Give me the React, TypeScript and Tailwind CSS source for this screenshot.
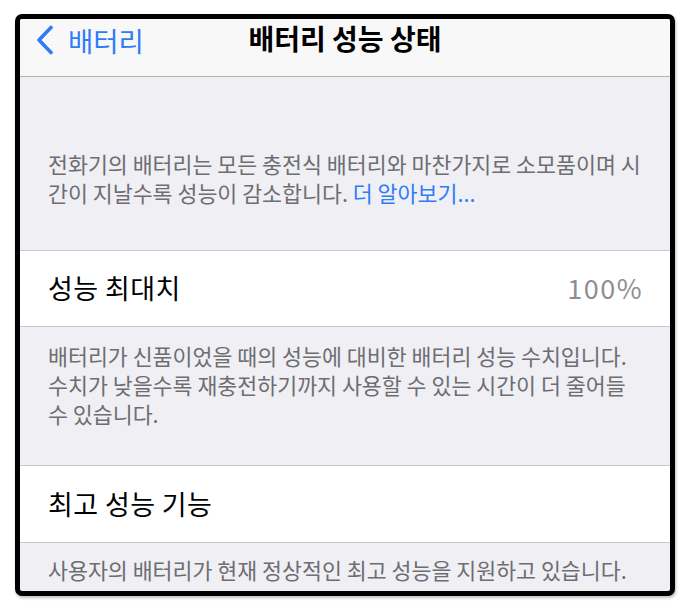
import React from "react";

const font = { fontFamily: '"Noto Sans CJK KR", "Noto Sans", sans-serif' };

function Chevron() {
  return (
    <svg width="20" height="30" viewBox="0 0 20 30" fill="none">
      <polyline
        points="16,2.5 4,15 16,27.5"
        stroke="#2f7cf6"
        strokeWidth="3.6"
        strokeLinecap="round"
        strokeLinejoin="round"
      />
    </svg>
  );
}

export default function App() {
  return (
    <div className="w-[690px] h-[611px] bg-white overflow-hidden" style={font}>
      <div className="ml-[15px] mt-[14px] w-[660px] h-[582px] border-[5px] border-black rounded-[7px] overflow-hidden bg-[#efeff4] shadow-[1px_2px_3px_rgba(0,0,0,0.25)]">
        {/* nav bar */}
        <div className="relative h-[58px] bg-[#f8f8f9] border-b border-[#b4b4b8] flex items-start">
          <div className="flex items-center pl-[15px] pt-[4px] gap-[13px]">
            <Chevron />
            <span className="text-[27.5px] leading-[34px] text-[#2f7cf6]">배터리</span>
          </div>
          <div className="absolute left-0 right-0 top-[1px] text-center text-[28px] leading-[36px] font-bold text-black">
            배터리 성능 상태
          </div>
        </div>

        {/* intro */}
        <div className="pt-[72px] pb-[43px] px-[28px] text-[21.7px] leading-[29px] text-[#6d6d72]">
          전화기의 배터리는 모든 충전식 배터리와 마찬가지로 소모품이며 시
          <br />
          간이 지날수록 성능이 감소합니다. <span className="text-[#2f7cf6]">더 알아보기...</span>
        </div>

        {/* max capacity */}
        <div className="h-[77px] bg-white border-y border-[#c8c7cc] flex items-center justify-between px-[28px]">
          <span className="text-[27px] tracking-[0.4px] text-black">성능 최대치</span>
          <span className="text-[27px] tracking-[1.5px] text-[#8e8e93] mr-[-1px]">100%</span>
        </div>
        <div className="pt-[14px] pb-[37px] px-[28px] text-[21.7px] leading-[29px] text-[#6d6d72]">
          배터리가 신품이었을 때의 성능에 대비한 배터리 성능 수치입니다.
          <br />
          수치가 낮을수록 재충전하기까지 사용할 수 있는 시간이 더 줄어들
          <br />
          수 있습니다.
        </div>

        {/* peak performance */}
        <div className="h-[78px] bg-white border-y border-[#c8c7cc] flex items-center px-[28px]">
          <span className="text-[27px] tracking-[0.4px] text-black">최고 성능 기능</span>
        </div>
        <div className="pt-[12px] px-[28px] text-[21.7px] leading-[29px] text-[#6d6d72]">
          사용자의 배터리가 현재 정상적인 최고 성능을 지원하고 있습니다.
        </div>
      </div>
    </div>
  );
}
